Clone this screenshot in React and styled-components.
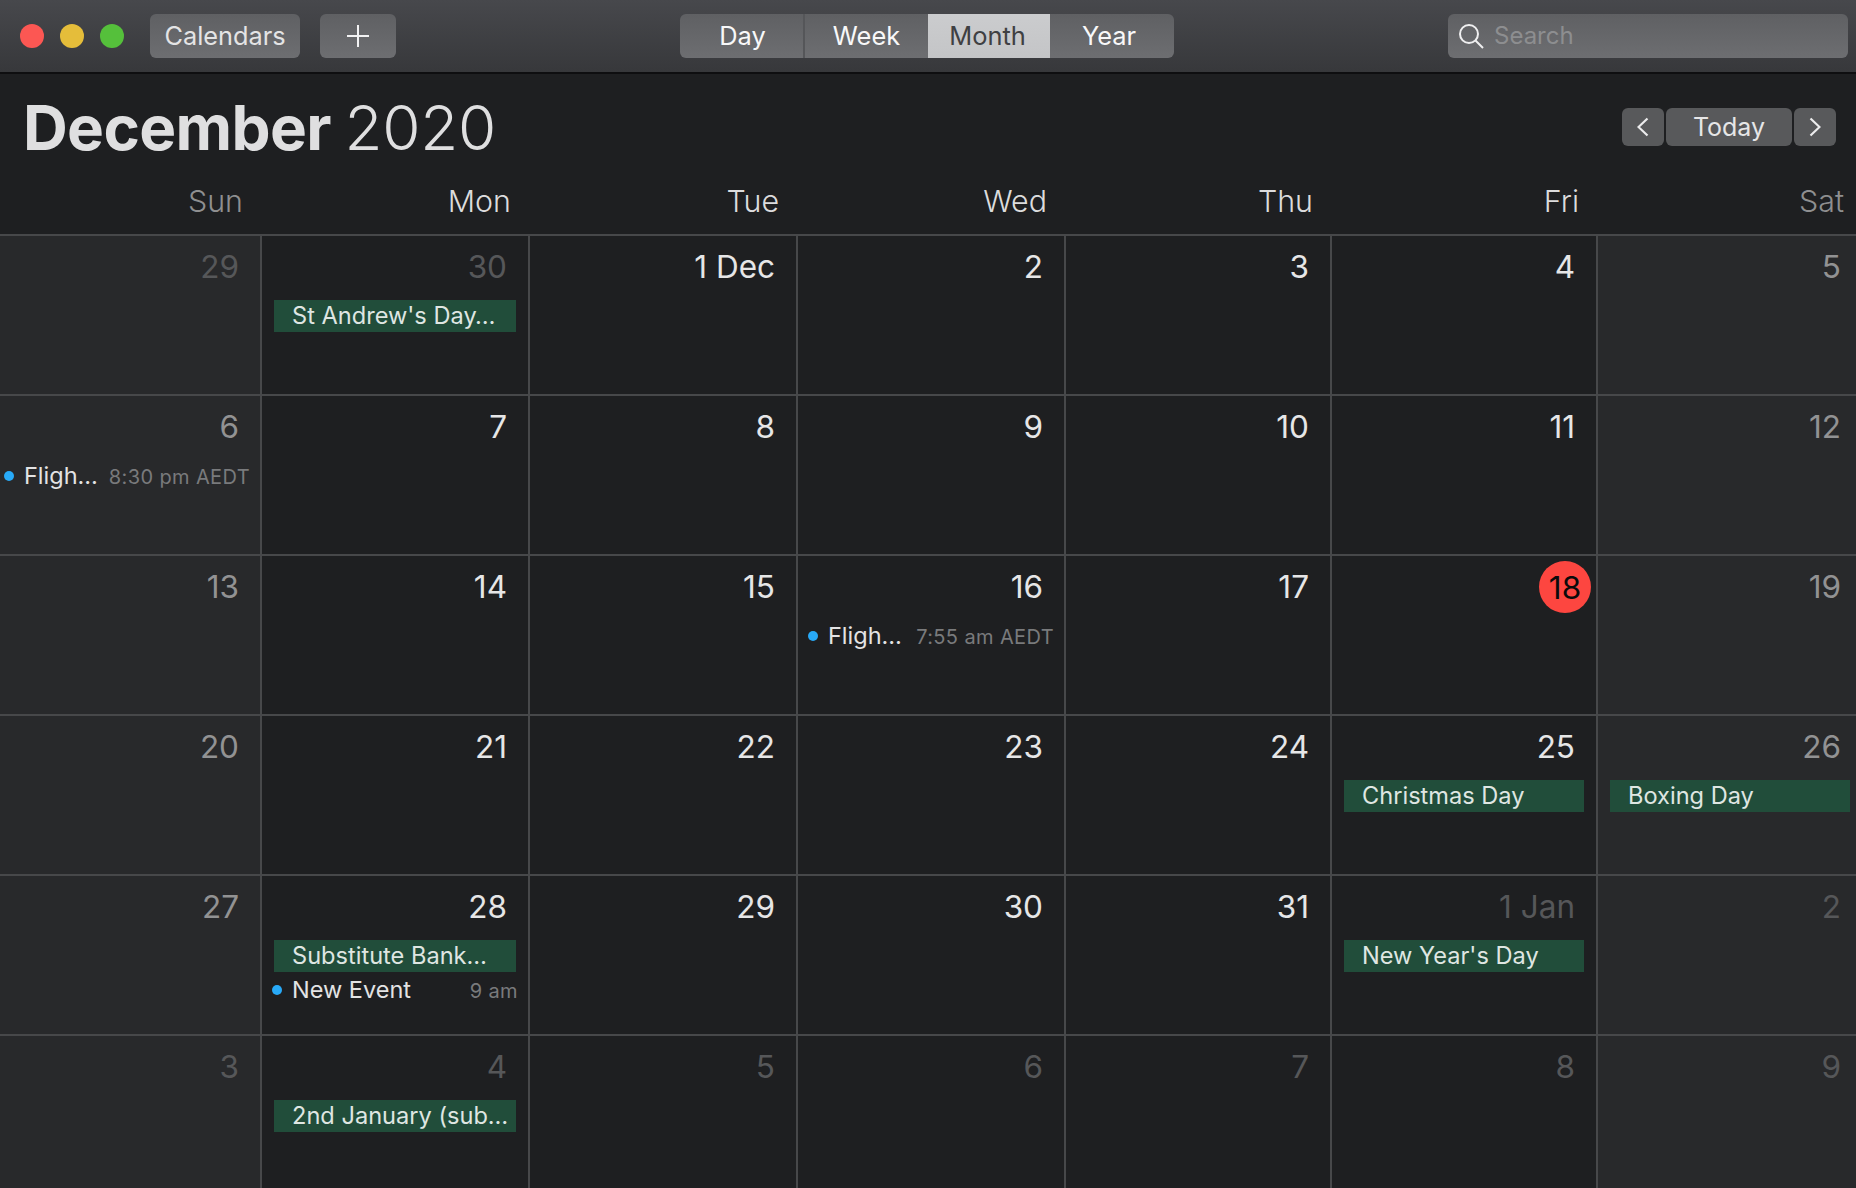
import React from "react";
import styled, { createGlobalStyle } from "styled-components";

const Global = createGlobalStyle`
  html, body { margin: 0; padding: 0; background: #1e1f21; }
  body { width: 1856px; height: 1188px; overflow: hidden; font-family: Inter, "Liberation Sans", sans-serif; }
  * { box-sizing: border-box; }
`;

const COLUMNS = "262px 268px 268px 268px 266px 266px 258px";

const Page = styled.div`
  width: 1856px;
  height: 1188px;
  overflow: hidden;
  display: flex;
  flex-direction: column;
  background: #1e1f21;
`;

const TitleBar = styled.header`
  height: 74px;
  flex: none;
  display: flex;
  align-items: flex-start;
  padding: 14px 8px 0 20px;
  background: linear-gradient(#47484c, #37383b);
  border-bottom: 2px solid #0e0e10;
`;

const Lights = styled.div`
  display: flex;
  gap: 16px;
  padding-top: 10px;
  margin-right: 26px;
`;

const Light = styled.span`
  width: 24px;
  height: 24px;
  border-radius: 50%;
  background: ${(p) => p.$color};
`;

const ToolButton = styled.div`
  height: 44px;
  width: ${(p) => p.$width}px;
  margin-right: 20px;
  padding-bottom: 1px;
  border-radius: 6px;
  display: flex;
  align-items: center;
  justify-content: center;
  color: #e4e4e5;
  font-size: 25.3px;
  background: linear-gradient(#5f6063, #6d6e71);
`;

const Segments = styled.div`
  display: flex;
  height: 44px;
  margin-left: 264px;
  border-radius: 6px;
  overflow: hidden;
  background: linear-gradient(#5f6063, #6d6e71);
`;

const Segment = styled.div`
  width: ${(p) => p.$width}px;
  display: flex;
  align-items: center;
  justify-content: center;
  padding: 0 ${(p) => p.$shift || 0}px 2px ${(p) => p.$nudge || 0}px;
  font-size: 25.4px;
  color: ${(p) => (p.$active ? "#3f4042" : "#f8f8f9")};
  background: ${(p) => (p.$active ? "linear-gradient(#cbccce, #c4c5c7)" : "transparent")};
  border-right: ${(p) => (p.$divider ? "2px solid #555659" : "0")};
`;

const Search = styled.div`
  width: 400px;
  height: 44px;
  margin-left: auto;
  border-radius: 6px;
  display: flex;
  align-items: center;
  gap: 10px;
  padding-left: 10px;
  color: #8d8e90;
  font-size: 24px;
  background: linear-gradient(#5f6063, #6d6e71);
`;

const SearchLabel = styled.span`
  padding-bottom: 2px;
`;

const TitleRow = styled.div`
  height: 106px;
  flex: none;
  display: flex;
  align-items: center;
  justify-content: space-between;
  padding: 0 20px 0 23px;
`;

const Title = styled.h1`
  margin: 0;
  font-size: 62px;
  font-weight: 300;
  color: #dfdfe0;
  letter-spacing: -0.3px;
  word-spacing: -3.5px;
  b { font-weight: 700; letter-spacing: -0.65px; }
`;

const Nav = styled.div`
  display: flex;
  gap: 2px;
`;

const NavButton = styled.div`
  height: 38px;
  width: ${(p) => p.$width}px;
  border-radius: 6px;
  display: flex;
  align-items: center;
  justify-content: center;
  background: #58595b;
  color: #e6e6e7;
  font-size: 25px;
`;

const WeekHeader = styled.div`
  height: 56px;
  flex: none;
  display: grid;
  grid-template-columns: ${COLUMNS};
  border-bottom: 2px solid #47484a;
`;

const WeekName = styled.div`
  text-align: right;
  font-size: 30.4px;
  font-weight: 300;
  line-height: 40px;
  padding-top: 1px;
  padding-right: ${(p) => (p.$last ? 12 : 19)}px;
  color: ${(p) => (p.$weekend ? "#8f8f90" : "#dcdcdd")};
`;

const Grid = styled.main`
  flex: 1;
  display: grid;
  grid-template-columns: ${COLUMNS};
  grid-auto-rows: 160px;
`;

const Cell = styled.div`
  min-width: 0;
  background: ${(p) => (p.$weekend ? "#28292b" : "#1e1f21")};
  border-right: ${(p) => (p.$col === 6 ? "0" : "2px solid #47484a")};
  border-bottom: 2px solid #47484a;
  padding-top: 5px;
`;

const DateLine = styled.div`
  height: 52px;
  display: flex;
  justify-content: flex-end;
  align-items: center;
  padding-right: ${(p) => (p.$today ? 5 : p.$last ? 15 : 21)}px;
  padding-bottom: ${(p) => (p.$today ? 0 : 2)}px;
  font-size: 31.5px;
  color: ${(p) => p.$tone};
`;

const TodayMark = styled.span`
  width: 52px;
  height: 52px;
  border-radius: 50%;
  background: #fd4640;
  color: #0b0b0b;
  display: flex;
  align-items: center;
  justify-content: center;
`;

const Events = styled.div`
  display: flex;
  flex-direction: column;
  gap: 2px;
  margin-top: 7px;
`;

const Bar = styled.div`
  height: 32px;
  margin: 0 ${(p) => (p.$last ? 6 : 12)}px 0 12px;
  padding: 0 0 1px 18px;
  display: flex;
  align-items: center;
  background: #214d3a;
  color: #dfe6e2;
  font-size: 23.6px;
  white-space: nowrap;
  overflow: hidden;
`;

const Timed = styled.div`
  height: 32px;
  display: flex;
  align-items: center;
  padding: 0 10px 0 ${(p) => (p.$first ? 4 : 10)}px;
  white-space: nowrap;
`;

const Dot = styled.span`
  width: 10px;
  height: 10px;
  flex: none;
  border-radius: 50%;
  background: #28aaf8;
  margin-right: 10px;
`;

const TimedName = styled.span`
  color: #e3e3e4;
  font-size: 23.5px;
  padding-bottom: 1px;
`;

const TimedTime = styled.span`
  margin-left: auto;
  padding-top: 2px;
  color: #797a7c;
  font-size: 20px;
  letter-spacing: 0.38px;
`;

const DIM = "#565759";
const BRIGHT = "#e6e6e7";
const WEEKEND = "#929293";

const weekNames = ["Sun", "Mon", "Tue", "Wed", "Thu", "Fri", "Sat"];
const rows = [
  ["29", "30", "1 Dec", "2", "3", "4", "5"],
  ["6", "7", "8", "9", "10", "11", "12"],
  ["13", "14", "15", "16", "17", "18", "19"],
  ["20", "21", "22", "23", "24", "25", "26"],
  ["27", "28", "29", "30", "31", "1 Jan", "2"],
  ["3", "4", "5", "6", "7", "8", "9"],
];

const events = {
  "0-1": [{ bar: "St Andrew's Day…" }],
  "1-0": [{ name: "Fligh…", time: "8:30 pm AEDT" }],
  "2-3": [{ name: "Fligh…", time: "7:55 am AEDT" }],
  "3-5": [{ bar: "Christmas Day" }],
  "3-6": [{ bar: "Boxing Day" }],
  "4-1": [{ bar: "Substitute Bank…" }, { name: "New Event", time: "9 am" }],
  "4-5": [{ bar: "New Year's Day" }],
  "5-1": [{ bar: "2nd January (sub…" }],
};

const isOutside = (r, c) =>
  (r === 0 && c < 2) || (r === 4 && c >= 5) || r === 5;

const toneFor = (r, c) => {
  if (isOutside(r, c)) return DIM;
  return c === 0 || c === 6 ? WEEKEND : BRIGHT;
};

const PlusIcon = () => (
  <svg width="24" height="24" viewBox="0 0 24 24" fill="none" stroke="#f2f2f3" strokeWidth="2">
    <path d="M12 1v22M1 12h22" />
  </svg>
);

const SearchIcon = () => (
  <svg width="26" height="26" viewBox="0 0 26 26" fill="none" stroke="#efeff0" strokeWidth="2">
    <circle cx="11" cy="11" r="9" />
    <path d="M17.5 17.5L25 25" />
  </svg>
);

const Chevron = ({ right }) => (
  <svg width="12" height="20" viewBox="0 0 12 20" fill="none" stroke="#ececed" strokeWidth="2.2">
    <path d={right ? "M1.5 1.5L10.5 10L1.5 18.5" : "M10.5 1.5L1.5 10L10.5 18.5"} />
  </svg>
);

export default function App() {
  return (
    <Page>
      <Global />
      <TitleBar>
        <Lights>
          <Light $color="#fc5753" />
          <Light $color="#e5bd3a" />
          <Light $color="#55c03b" />
        </Lights>
        <ToolButton $width={150}>Calendars</ToolButton>
        <ToolButton $width={76}><PlusIcon /></ToolButton>
        <Segments>
          <Segment $width={125} $divider $nudge={2}>Day</Segment>
          <Segment $width={123}>Week</Segment>
          <Segment $width={122} $active $shift={3}>Month</Segment>
          <Segment $width={124} $shift={6}>Year</Segment>
        </Segments>
        <Search><SearchIcon /><SearchLabel>Search</SearchLabel></Search>
      </TitleBar>
      <TitleRow>
        <Title><b>December</b> 2020</Title>
        <Nav>
          <NavButton $width={42}><Chevron /></NavButton>
          <NavButton $width={126}>Today</NavButton>
          <NavButton $width={42}><Chevron right /></NavButton>
        </Nav>
      </TitleRow>
      <WeekHeader>
        {weekNames.map((n, i) => (
          <WeekName key={n} $weekend={i === 0 || i === 6} $last={i === 6}>{n}</WeekName>
        ))}
      </WeekHeader>
      <Grid>
        {rows.flatMap((row, r) =>
          row.map((label, c) => {
            const today = label === "18";
            const list = events[`${r}-${c}`] || [];
            return (
              <Cell key={`${r}-${c}`} $col={c} $weekend={c === 0 || c === 6}>
                <DateLine $tone={toneFor(r, c)} $today={today} $last={c === 6}>
                  {today ? <TodayMark>{label}</TodayMark> : label}
                </DateLine>
                {list.length > 0 && (
                  <Events>
                    {list.map((e) =>
                      e.bar ? (
                        <Bar key={e.bar} $last={c === 6}>{e.bar}</Bar>
                      ) : (
                        <Timed key={e.name} $first={c === 0}>
                          <Dot />
                          <TimedName>{e.name}</TimedName>
                          <TimedTime>{e.time}</TimedTime>
                        </Timed>
                      )
                    )}
                  </Events>
                )}
              </Cell>
            );
          })
        )}
      </Grid>
    </Page>
  );
}
